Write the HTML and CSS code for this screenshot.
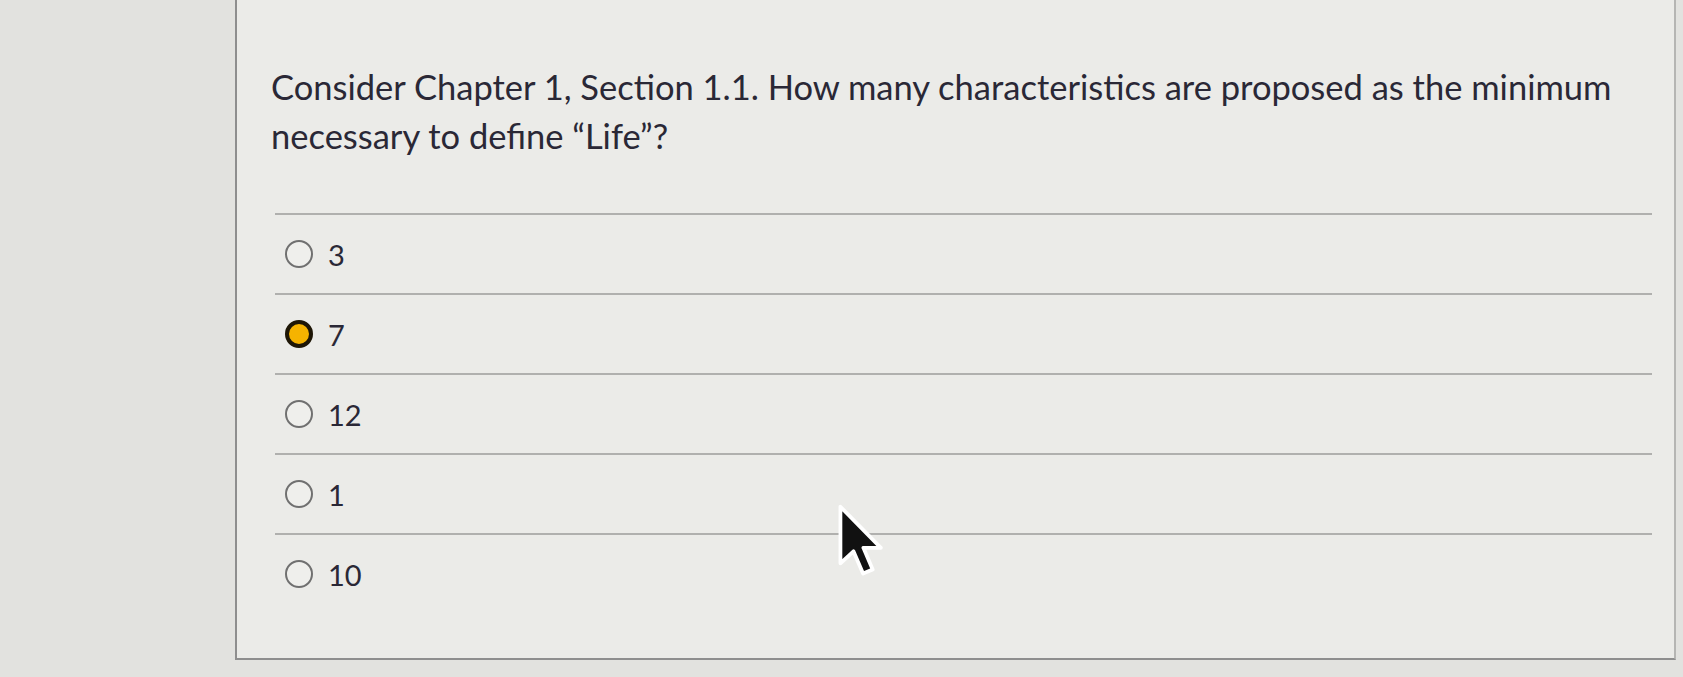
FILE: index.html
```html
<!DOCTYPE html>
<html lang="en">

<head>
    <meta charset="UTF-8">
    <meta name="viewport" content="width=device-width, initial-scale=1.0">
    <title>Quiz Question</title>
    <link rel="stylesheet" href="styles.css">
</head>

<body>
    <div class="question-panel">
        <div class="question-text">
            Consider Chapter 1, Section 1.1. How many characteristics are proposed as the minimum necessary to define &ldquo;Life&rdquo;?
        </div>
        <div class="answers">
            <label class="answer">
                <input type="radio" name="q1" value="3">
                <span class="answer-text">3</span>
            </label>
            <label class="answer">
                <input type="radio" name="q1" value="7" checked>
                <span class="answer-text">7</span>
            </label>
            <label class="answer">
                <input type="radio" name="q1" value="12">
                <span class="answer-text">12</span>
            </label>
            <label class="answer">
                <input type="radio" name="q1" value="1">
                <span class="answer-text">1</span>
            </label>
            <label class="answer">
                <input type="radio" name="q1" value="10">
                <span class="answer-text">10</span>
            </label>
        </div>
    </div>

    <svg class="cursor" viewBox="0 0 14 22" width="48" height="76">
        <path d="M1 1 L1 17.5 L4.8 14 L7.6 20.5 L10.4 19.3 L7.7 13 L12.8 13 Z" fill="#111" stroke="#fff" stroke-width="1.1" stroke-linejoin="round"/>
    </svg>
</body>

</html>
```

FILE: styles.css
```css
body {
    margin: 0;
    height: 677px;
    overflow: hidden;
    background-color: #e2e2df;
    font-family: Lato, "Liberation Sans", sans-serif;
    color: #2a2836;
    position: relative;
}

.question-panel {
    margin-left: 235px;
    width: 1441px;
    background-color: #ebebe8;
    border-left: 2px solid #8e8e8e;
    border-right: 2px solid #b5b5b3;
    border-bottom: 2px solid #8e8e8e;
    padding: 62px 22px 45px 34px;
    box-sizing: border-box;
}

.question-text {
    font-size: 34.5px;
    line-height: 49px;
    margin-bottom: 53px;
    padding-right: 20px;
}

.answers {
    margin-left: 4px;
    border-top: 2px solid #b0b0ae;
}

.answer {
    display: flex;
    align-items: center;
    height: 78px;
    padding-left: 10px;
    border-bottom: 2px solid #b0b0ae;
    font-size: 29px;
    cursor: pointer;
}

.answer:last-child {
    border-bottom: none;
}

.answer input {
    appearance: none;
    margin: 0 15px 0 0;
    width: 28px;
    height: 28px;
    border: 2px solid #707070;
    border-radius: 50%;
    background-color: #efefec;
    box-sizing: border-box;
}

.answer input:checked {
    background-color: #f6b300;
    border: 4px solid #1e1606;
}

.cursor {
    position: absolute;
    left: 837px;
    top: 503px;
}
```
